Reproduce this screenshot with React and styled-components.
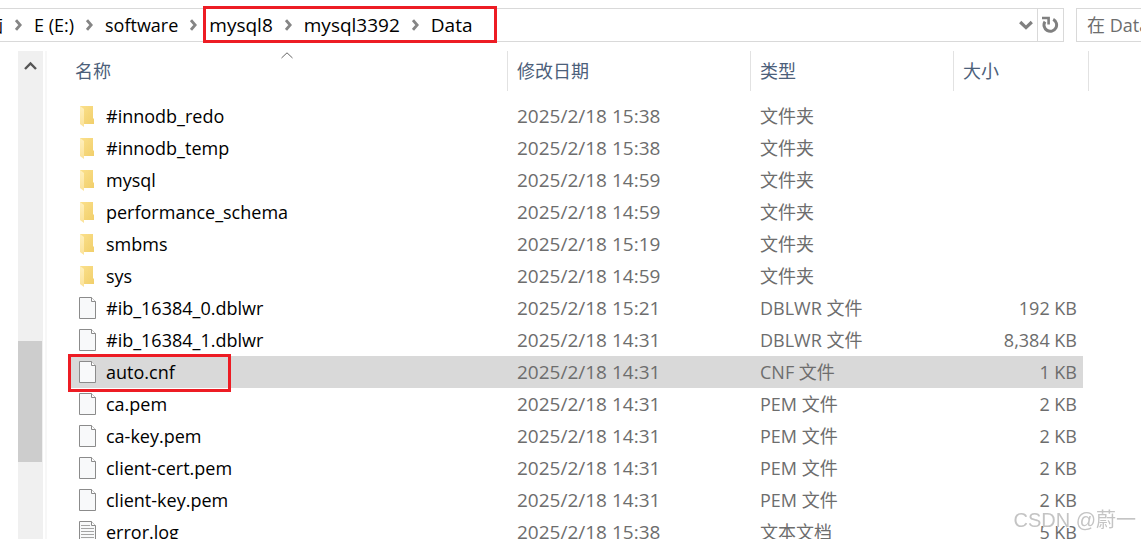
import React from "react";
import styled, { createGlobalStyle, css } from "styled-components";

const latin = `"Open Sans", "Noto Sans CJK SC", sans-serif`;

const GlobalStyle = createGlobalStyle`
  *, *::before, *::after { box-sizing: border-box; }
  body {
    margin: 0;
    background: #fff;
    color: #000;
    font: 18px/24px ${latin};
  }
`;

const Page = styled.div`
  display: flex;
  flex-direction: column;
  gap: 9px;
  height: 100vh;
  padding-top: 8px;
  overflow: hidden;
`;

const Toolbar = styled.header`
  display: flex;
  gap: 12px;
  height: 34px;
  flex: none;
`;

const AddressBar = styled.div`
  display: flex;
  flex: 1;
  min-width: 0;
  border: 1px solid #d9d9d9;
  border-left: 0;
`;

const Crumbs = styled.nav`
  display: flex;
  align-items: center;
  gap: 12px;
  flex: 1;
  min-width: 0;
  white-space: nowrap;
`;

const Crumb = styled.a`
  color: #000;
  text-decoration: none;
`;

const ClippedCrumb = styled(Crumb)`
  display: flex;
  justify-content: flex-end;
  width: 3px;
  overflow: hidden;
`;

const marked = css`
  position: relative;
  &::after {
    content: "";
    position: absolute;
    border: 3px solid #ed1c24;
    pointer-events: none;
  }
`;

const MarkedCrumbs = styled.div`
  display: flex;
  align-items: center;
  gap: 12px;
  height: 100%;
  font-size: 19px;
  ${marked}
  &::after { inset: -3px -24px -2px -6px; }
`;

const IconButton = styled.button`
  display: flex;
  align-items: center;
  justify-content: center;
  width: ${(p) => p.$width}px;
  padding: 0;
  border: 0;
  border-left: ${(p) => (p.$divided ? "1px solid #d9d9d9" : "0")};
  background: none;
`;

const Search = styled.input`
  width: 65px;
  padding: 0 0 0 10px;
  border: 1px solid #d9d9d9;
  border-right: 0;
  border-radius: 0;
  background: #fff;
  font: inherit;
  &::placeholder { color: #6d6d6d; opacity: 1; }
`;

const Body = styled.div`
  display: flex;
  flex: 1;
  min-height: 0;
  padding-left: 18px;
`;

const ScrollTrack = styled.div`
  display: flex;
  flex-direction: column;
  width: 25px;
  background: #f0f0f0;
`;

const ScrollSpace = styled.div`
  flex: ${(p) => p.$share} 0 0;
`;

const ScrollThumb = styled.div`
  flex: 121 0 0;
  width: 24px;
  background: #cdcdcd;
`;

const ScrollButton = styled.button`
  display: flex;
  align-items: center;
  justify-content: center;
  height: 30px;
  padding: 0;
  border: 0;
  background: none;
`;

const Listing = styled.main`
  flex: 1;
  min-width: 0;
  margin-left: 2px;
  padding: 0 52px 0 21px;
  border-left: 2px solid #f7f7f7;
  overflow: hidden;
`;

const FileTable = styled.table`
  width: 100%;
  table-layout: fixed;
  border-collapse: collapse;
  white-space: nowrap;
`;

const Col = styled.col`
  width: ${(p) => (p.$width ? `${p.$width}px` : "auto")};
`;

const HeadCell = styled.th`
  height: 49px;
  padding: 0;
  vertical-align: top;
  text-align: left;
  font-weight: 400;
  color: #4c607a;
`;

const HeadLabel = styled.div`
  position: relative;
  display: flex;
  align-items: center;
  height: 40px;
  padding-left: ${(p) => p.$indent}px;
  border-right: 1px solid #e2e2e2;
`;

const SortMark = styled.svg`
  position: absolute;
  top: 1px;
  left: 50%;
  margin-left: -7px;
`;

const Cell = styled.td`
  height: 32px;
  padding: 0 0 0 9px;
  color: #6d6d6d;
`;

const DateCell = styled(Cell)`
  font-size: 19px;
`;

const SizeCell = styled(Cell)`
  padding-right: 6px;
  text-align: right;
`;

const NameCell = styled(Cell)`
  padding: 0;
  color: #000;
`;

const FileName = styled.div`
  display: flex;
  align-items: center;
  gap: 10px;
  height: 32px;
  padding-left: 11px;
  ${(p) => p.$marked && marked}
  &::after {
    top: -2px;
    left: 0;
    width: 163px;
    height: 38px;
  }
`;

const FileRow = styled.tr`
  & > td:not(:last-child) {
    background: ${(p) => (p.$selected ? "#d9d9d9" : "transparent")};
  }
`;

const Gutter = styled.td`
  padding: 0;
`;

const Watermark = styled.div`
  position: fixed;
  right: 5px;
  bottom: 7px;
  color: #c4c4c4;
  font: 20px/24px "Liberation Sans", "Noto Sans CJK SC", sans-serif;
  text-shadow: 1px 1px 0 #fff;
  white-space: nowrap;
  pointer-events: none;
`;

const Separator = () => (
  <svg width="7" height="12" viewBox="0 0 7 12" fill="none" stroke="#858585" strokeWidth="2.8" aria-hidden="true">
    <path d="M1 1.2 5.2 6 1 10.8" />
  </svg>
);

const FolderIcon = () => (
  <svg width="17" height="24" viewBox="0 0 17 24" aria-hidden="true">
    <defs>
      <linearGradient id="folderBack" x1="0" y1="0" x2="1" y2="1">
        <stop offset="0" stopColor="#fbe08c" />
        <stop offset="1" stopColor="#f1cf6b" />
      </linearGradient>
      <linearGradient id="folderFront" x1="0" y1="0" x2="0" y2="1">
        <stop offset="0" stopColor="#fff0bd" />
        <stop offset="1" stopColor="#fbe299" />
      </linearGradient>
    </defs>
    <path d="M1 2H14V14L15 15V20H5L1 19Z" fill="url(#folderBack)" />
    <path d="M1 2 5 5V23L1 20Z" fill="url(#folderFront)" />
  </svg>
);

const FileIcon = ({ lined }) => (
  <svg width="17" height="22" viewBox="0 0 17 22" aria-hidden="true">
    <path d="M.5.5H12.5L16.5 4.5V21.5H.5Z" fill="#f8f9fa" stroke="#8b8b8b" />
    <path d="M12.5.5V4.5H16.5" fill="#fff" stroke="#8b8b8b" />
    {lined && <path d="M2 4.5H11M2 7.5H15M2 10.5H15M2 13.5H15M2 16.5H15M2 19.5H15" stroke="#a4a4a4" />}
  </svg>
);

const folder = "文件夹";
const files = [
  ["#innodb_redo", "2025/2/18 15:38", folder, ""],
  ["#innodb_temp", "2025/2/18 15:38", folder, ""],
  ["mysql", "2025/2/18 14:59", folder, ""],
  ["performance_schema", "2025/2/18 14:59", folder, ""],
  ["smbms", "2025/2/18 15:19", folder, ""],
  ["sys", "2025/2/18 14:59", folder, ""],
  ["#ib_16384_0.dblwr", "2025/2/18 15:21", "DBLWR 文件", "192 KB"],
  ["#ib_16384_1.dblwr", "2025/2/18 14:31", "DBLWR 文件", "8,384 KB"],
  ["auto.cnf", "2025/2/18 14:31", "CNF 文件", "1 KB"],
  ["ca.pem", "2025/2/18 14:31", "PEM 文件", "2 KB"],
  ["ca-key.pem", "2025/2/18 14:31", "PEM 文件", "2 KB"],
  ["client-cert.pem", "2025/2/18 14:31", "PEM 文件", "2 KB"],
  ["client-key.pem", "2025/2/18 14:31", "PEM 文件", "2 KB"],
  ["error.log", "2025/2/18 15:38", "文本文档", "5 KB"],
];

export default function App() {
  return (
    <Page>
      <GlobalStyle />
      <Toolbar>
        <AddressBar>
          <Crumbs aria-label="路径">
            <ClippedCrumb href="#pc">脑</ClippedCrumb>
            <Separator />
            <Crumb href="#e">E (E:)</Crumb>
            <Separator />
            <Crumb href="#software">software</Crumb>
            <Separator />
            <MarkedCrumbs>
              <Crumb href="#mysql8">mysql8</Crumb>
              <Separator />
              <Crumb href="#mysql3392">mysql3392</Crumb>
              <Separator />
              <Crumb href="#data">Data</Crumb>
            </MarkedCrumbs>
          </Crumbs>
          <IconButton $width={23} aria-label="历史记录">
            <svg width="14" height="10" viewBox="0 0 14 10" fill="none" stroke="#808080" strokeWidth="3.2">
              <path d="M1.2 2 7 7.6 12.8 2" />
            </svg>
          </IconButton>
          <IconButton $width={26} $divided aria-label="刷新">
            <svg width="17" height="18" viewBox="0 0 17 18" fill="none" stroke="#808080">
              <path d="M11.2 3.4A6.3 6.3 0 1 1 3 5.6" strokeWidth="3" />
              <path d="M0 2H6.6V8.4" strokeWidth="2.6" />
            </svg>
          </IconButton>
        </AddressBar>
        <Search type="text" aria-label="搜索" placeholder="在 Data" />
      </Toolbar>
      <Body>
        <ScrollTrack>
          <ScrollButton aria-label="向上滚动">
            <svg width="13" height="10" viewBox="0 0 13 10" fill="none" stroke="#555" strokeWidth="2.4">
              <path d="M1 8 6.5 2.4 12 8" />
            </svg>
          </ScrollButton>
          <ScrollSpace $share={260} />
          <ScrollThumb />
          <ScrollSpace $share={77} />
        </ScrollTrack>
        <Listing>
          <FileTable>
            <colgroup>
              <Col />
              <Col $width={243} />
              <Col $width={203} />
              <Col $width={129} />
              <Col $width={6} />
            </colgroup>
            <thead>
              <tr>
                <HeadCell scope="col" aria-sort="ascending">
                  <HeadLabel $indent={7}>
                    名称
                    <SortMark width="12" height="7" viewBox="0 0 12 7" fill="none" stroke="#666">
                      <path d="M.5 6 6 .8 11.5 6" />
                    </SortMark>
                  </HeadLabel>
                </HeadCell>
                <HeadCell scope="col"><HeadLabel $indent={9}>修改日期</HeadLabel></HeadCell>
                <HeadCell scope="col"><HeadLabel $indent={9}>类型</HeadLabel></HeadCell>
                <HeadCell scope="col" colSpan={2}><HeadLabel $indent={9}>大小</HeadLabel></HeadCell>
              </tr>
            </thead>
            <tbody>
              {files.map(([name, date, type, size]) => {
                const selected = name === "auto.cnf";
                return (
                  <FileRow key={name} $selected={selected}>
                    <NameCell>
                      <FileName $marked={selected}>
                        {type === folder ? <FolderIcon /> : <FileIcon lined={name.endsWith(".log")} />}
                        {name}
                      </FileName>
                    </NameCell>
                    <DateCell>{date}</DateCell>
                    <Cell>{type}</Cell>
                    <SizeCell>{size}</SizeCell>
                    <Gutter />
                  </FileRow>
                );
              })}
            </tbody>
          </FileTable>
        </Listing>
      </Body>
      <Watermark>CSDN @蔚一</Watermark>
    </Page>
  );
}
